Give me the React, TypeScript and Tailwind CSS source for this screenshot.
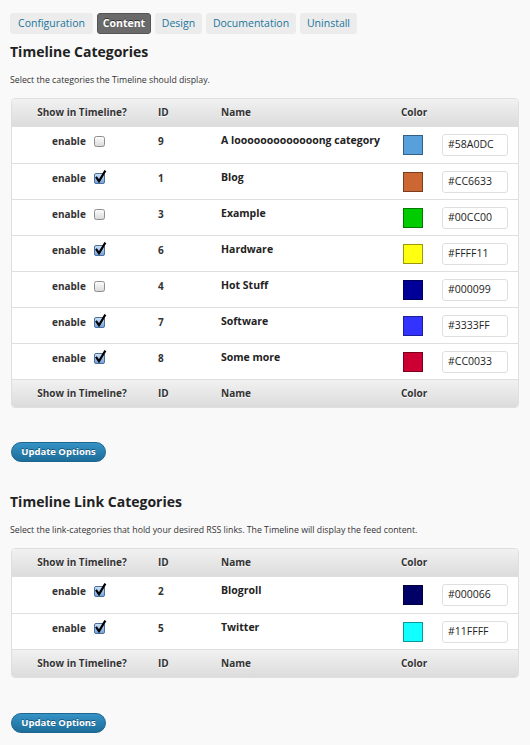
import React from "react";

type Row = { id: number; name: string; color: string; checked: boolean };

const cats: Row[] = [
  { id: 9, name: "A looooooooooooong category", color: "#58A0DC", checked: false },
  { id: 1, name: "Blog", color: "#CC6633", checked: true },
  { id: 3, name: "Example", color: "#00CC00", checked: false },
  { id: 6, name: "Hardware", color: "#FFFF11", checked: true },
  { id: 4, name: "Hot Stuff", color: "#000099", checked: false },
  { id: 7, name: "Software", color: "#3333FF", checked: true },
  { id: 8, name: "Some more", color: "#CC0033", checked: true },
];

const links: Row[] = [
  { id: 2, name: "Blogroll", color: "#000066", checked: true },
  { id: 5, name: "Twitter", color: "#11FFFF", checked: true },
];

function Checkbox({ checked }: { checked: boolean }) {
  if (!checked) {
    return (
      <svg width="13" height="14" viewBox="0 0 13 14" className="block">
        <defs>
          <linearGradient id="ug" x1="0" y1="0" x2="0" y2="1">
            <stop offset="0" stopColor="#ffffff" />
            <stop offset="1" stopColor="#d8d8d8" />
          </linearGradient>
        </defs>
        <rect x="0.5" y="2.5" width="10" height="10" rx="2" fill="url(#ug)" stroke="#8d8d8d" />
      </svg>
    );
  }
  return (
    <svg width="13" height="14" viewBox="0 0 13 14" className="block overflow-visible">
      <defs>
        <linearGradient id="cg" x1="0" y1="0" x2="0" y2="1">
          <stop offset="0" stopColor="#cfe3f8" />
          <stop offset="1" stopColor="#6fa2dc" />
        </linearGradient>
      </defs>
      <rect x="0.5" y="2.5" width="10" height="10" rx="1.5" fill="url(#cg)" stroke="#4d6f99" />
      <path d="M2.6 6.8 L5 10.2 L10.8 0.6" fill="none" stroke="#000" strokeWidth="2.2" strokeLinecap="square" strokeLinejoin="miter" />
    </svg>
  );
}

const grid = "grid grid-cols-[140px_63px_180px_40px_83px]";

function HeadRow({ footer }: { footer?: boolean }) {
  return (
    <div
      className={`${grid} h-[28px] items-center bg-gradient-to-b from-[#f1f1f1] to-[#dcdcdc] text-[10px] font-bold text-[#333] [text-shadow:0_1px_0_#fff] ${
        footer ? "border-t border-[#dfdfdf]" : "border-b border-[#dfdfdf]"
      }`}
    >
      <div className="text-center">Show in Timeline?</div>
      <div className="pl-[6px]">ID</div>
      <div className="pl-[6px]">Name</div>
      <div className="pl-[6px]">Color</div>
      <div />
    </div>
  );
}

function BodyRow({ r, first }: { r: Row; first: boolean }) {
  return (
    <div className={`${grid} h-[36px] bg-white ${first ? "" : "border-t border-[#dfdfdf]"}`}>
      <div className="flex items-start pl-[40px] pt-[7px]">
        <span className="w-[42px] text-[10px] font-bold leading-[14px] text-[#333]">enable</span>
        <div>
          <Checkbox checked={r.checked} />
        </div>
      </div>
      <div className="pl-[6px] pt-[7px] text-[10px] font-bold leading-[14px] text-[#333]">{r.id}</div>
      <div className="pl-[6px] pt-[6px] text-[10.5px] font-bold leading-[14px] text-[#222] whitespace-nowrap">{r.name}</div>
      <div className="pl-[8px] pt-[8px]">
        <div className="h-[20px] w-[20px] border border-black/40" style={{ backgroundColor: r.color }} />
      </div>
      <div className="pl-[7px] pt-[7px]">
        <div className="flex h-[22px] w-[66px] items-center rounded-[3px] border border-[#dfdfdf] bg-white pl-[5px] text-[10.5px] text-[#222]">
          {r.color}
        </div>
      </div>
    </div>
  );
}

function Table({ rows }: { rows: Row[] }) {
  return (
    <div className="ml-[1px] w-[508px] overflow-hidden rounded-[4px] border border-[#dfdfdf] bg-white">
      <HeadRow />
      {rows.map((r, i) => (
        <BodyRow key={r.id} r={r} first={i === 0} />
      ))}
      <HeadRow footer />
    </div>
  );
}

function UpdateButton() {
  return (
    <div className="ml-[1px] flex h-[20px] w-[95px] items-center justify-center rounded-full border border-[#1e6690] bg-gradient-to-b from-[#3593c6] to-[#1d6d99] text-[9.5px] font-bold text-white [text-shadow:0_-1px_0_#17557a]">
      Update Options
    </div>
  );
}

const tabs = [
  { label: "Configuration", w: "w-[83px]", active: false },
  { label: "Content", w: "w-[54px]", active: true },
  { label: "Design", w: "w-[47px]", active: false },
  { label: "Documentation", w: "w-[90px]", active: false },
  { label: "Uninstall", w: "w-[57px]", active: false },
];

export default function App() {
  return (
    <div className="h-[745px] w-[530px] overflow-hidden bg-[#f9f9f9] px-[10px] pt-[13px] font-['Open_Sans','Liberation_Sans',sans-serif] text-[#333]">
      <div className="flex gap-[4px]">
        {tabs.map((t) => (
          <div
            key={t.label}
            className={`flex h-[21px] items-center justify-center rounded-[3px] text-[10.5px] ${t.w} ${
              t.active
                ? "bg-[#6a6a6a] font-bold text-white [text-shadow:0_-1px_0_#333] border border-[#555]"
                : "bg-[#ececec] text-[#21759b]"
            }`}
          >
            {t.label}
          </div>
        ))}
      </div>

      <h2 className="mt-[8px] text-[14px] font-bold leading-[20px] text-[#222]">Timeline Categories</h2>
      <p className="mt-[12px] text-[8.75px] leading-[12px] text-[#333]">
        Select the categories the Timeline should display.
      </p>
      <div className="mt-[12px]">
        <Table rows={cats} />
      </div>
      <div className="mt-[34px]">
        <UpdateButton />
      </div>

      <h2 className="mt-[30px] text-[14px] font-bold leading-[20px] text-[#222]">Timeline Link Categories</h2>
      <p className="mt-[12px] text-[8.75px] leading-[12px] text-[#333]">
        Select the link-categories that hold your desired RSS links. The Timeline will display the feed content.
      </p>
      <div className="mt-[12px]">
        <Table rows={links} />
      </div>
      <div className="mt-[35px]">
        <UpdateButton />
      </div>
    </div>
  );
}
